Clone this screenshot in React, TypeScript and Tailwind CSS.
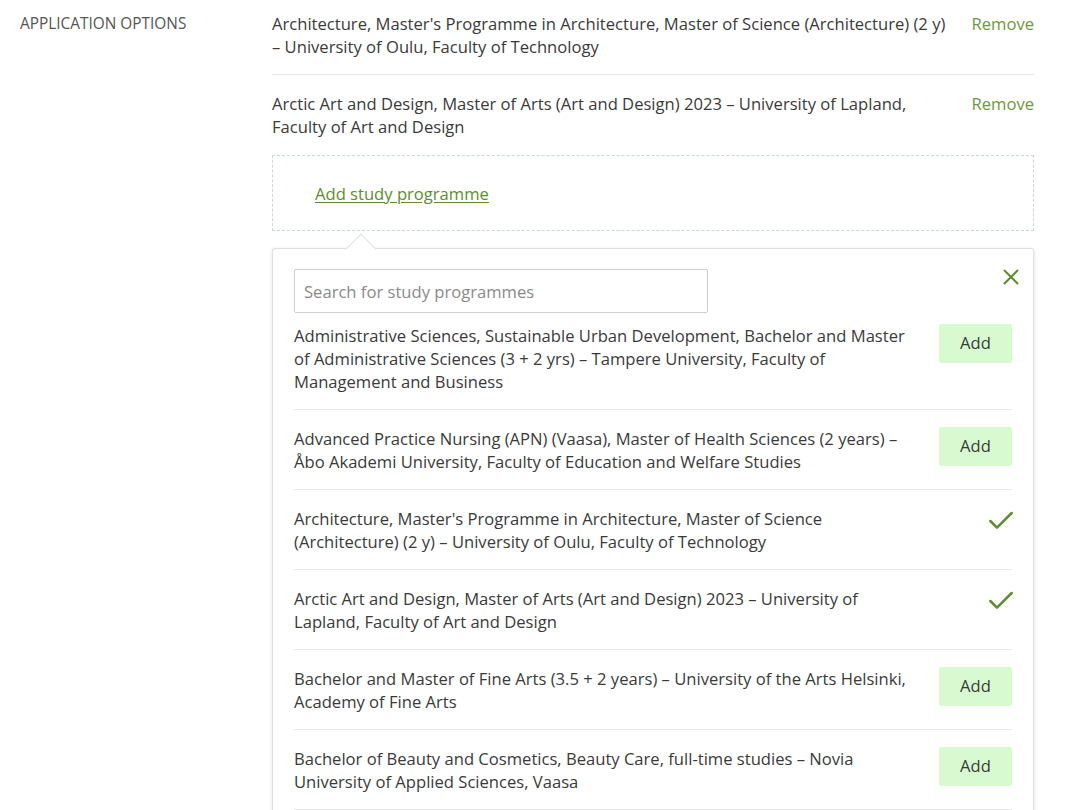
import { X, Check } from 'lucide-react';

const selected = [
  "Architecture, Master's Programme in Architecture, Master of Science (Architecture) (2 y) – University of Oulu, Faculty of Technology",
  'Arctic Art and Design, Master of Arts (Art and Design) 2023 – University of Lapland, Faculty of Art and Design',
];

const results = [
  {
    name: 'Administrative Sciences, Sustainable Urban Development, Bachelor and Master of Administrative Sciences (3 + 2 yrs) – Tampere University, Faculty of Management and Business',
    added: false,
  },
  {
    name: 'Advanced Practice Nursing (APN) (Vaasa), Master of Health Sciences (2 years) – Åbo Akademi University, Faculty of Education and Welfare Studies',
    added: false,
  },
  {
    name: "Architecture, Master's Programme in Architecture, Master of Science (Architecture) (2 y) – University of Oulu, Faculty of Technology",
    added: true,
  },
  {
    name: 'Arctic Art and Design, Master of Arts (Art and Design) 2023 – University of Lapland, Faculty of Art and Design',
    added: true,
  },
  {
    name: 'Bachelor and Master of Fine Arts (3.5 + 2 years) – University of the Arts Helsinki, Academy of Fine Arts',
    added: false,
  },
  {
    name: 'Bachelor of Beauty and Cosmetics, Beauty Care, full-time studies – Novia University of Applied Sciences, Vaasa',
    added: false,
  },
];

export default function App() {
  return (
    <div
      className="h-[810px] overflow-hidden bg-white text-[#3a3a3a] flex items-start"
      style={{ fontFamily: '"Open Sans", "Noto Sans", sans-serif' }}
    >
      <div className="w-[272px] shrink-0 pl-5 pt-[13px] text-[15.4px] leading-[22px] text-[#555] uppercase">
        Application options
      </div>

      <div className="w-[762px] shrink-0">
        <div className="flex items-start justify-between gap-4 border-b border-[#e8e8e8] pt-[12px] pb-[16px]">
          <p className="w-[680px] text-[16.6px] leading-[23px]">{selected[0]}</p>
          <button className="text-[16.6px] leading-[23px] text-[#6a9a3a] whitespace-nowrap">Remove</button>
        </div>
        <div className="flex items-start justify-between gap-4 pt-[17px]">
          <p className="w-[680px] text-[16.6px] leading-[23px]">{selected[1]}</p>
          <button className="text-[16.6px] leading-[23px] text-[#6a9a3a] whitespace-nowrap">Remove</button>
        </div>

        <div className="mt-[17px] h-[76px] border border-dashed border-[#c9d6dc] flex items-center pl-[42px]">
          <a href="#" className="text-[16.6px] leading-[23px] text-[#5b8f2c] underline underline-offset-2">
            Add study programme
          </a>
        </div>

        <div className="relative mt-[17px] rounded-[3px] border border-[#e0e0e0] shadow-[0_1px_4px_rgba(0,0,0,0.12)] bg-white px-[21px] pt-5 pb-6">
          <div className="absolute -top-[11px] left-[77px] w-[22px] h-[22px] rotate-45 bg-white border-l border-t border-[#e0e0e0]" />
          <div className="relative flex items-start justify-between">
            <input
              className="w-[414px] h-[44px] border border-[#cfcfcf] rounded-[2px] px-[9px] text-[16.6px] text-[#3a3a3a] placeholder:text-[#8a8a8a] outline-none"
              placeholder="Search for study programmes"
              style={{ fontFamily: '"Open Sans", "Noto Sans", sans-serif' }}
            />
            <button className="mt-[-5px] mr-[-12px] text-[#5b8f2c]">
              <X className="w-[26px] h-[26px]" strokeWidth={1.8} />
            </button>
          </div>

          <div className="mt-[11px]">
            {results.map((r, i) => (
              <div
                key={r.name}
                className={`flex items-start justify-between gap-6 ${i === 0 ? 'pb-[16px]' : 'pt-[17px] pb-[16px]'} border-b border-[#e8e8e8]`}
              >
                <p className="w-[622px] text-[16.6px] leading-[23px]">{r.name}</p>
                {r.added ? (
                  <Check className="w-[32px] h-[32px] text-[#5b8f2c] mt-[-2px] mr-[-5px]" strokeWidth={1.9} />
                ) : (
                  <button className="w-[73px] h-[39px] rounded-[2px] bg-[#d8fad0] text-[16.6px] text-[#3a3a3a] shrink-0">
                    Add
                  </button>
                )}
              </div>
            ))}
          </div>
        </div>
      </div>
    </div>
  );
}
